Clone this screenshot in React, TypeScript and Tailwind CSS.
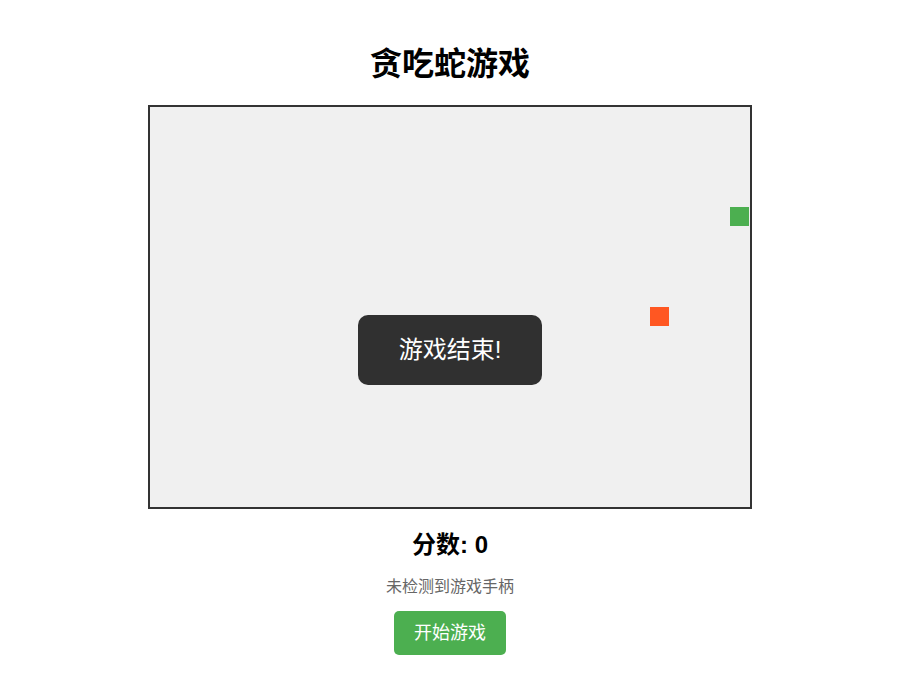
import React from "react";

export default function App() {
  const font = { fontFamily: '"Liberation Sans", "Noto Sans CJK SC", sans-serif' };
  return (
    <div className="w-[900px] h-[700px] bg-white flex flex-col items-center" style={font}>
      <h1 className="mt-[44px] h-[40px] leading-[40px] text-[32px] font-bold text-black mb-[21px]">贪吃蛇游戏</h1>
      <div className="relative w-[604px] h-[404px] border-2 border-[#333333] bg-[#f0f0f0]">
        <div className="absolute left-[580px] top-[100px] w-[19px] h-[19px] bg-[#4caf50]" />
        <div className="absolute left-[500px] top-[200px] w-[19px] h-[19px] bg-[#ff5722]" />
        <div className="absolute left-[208px] top-[208px] w-[184px] h-[70px] rounded-[10px] bg-[#303030] flex items-center justify-center text-white text-[24px]">
          游戏结束!
        </div>
      </div>
      <div className="mt-[20px] h-[32px] leading-[32px] text-[24px] font-bold text-black">分数: 0</div>
      <div className="mt-[16px] h-[20px] leading-[20px] text-[16px] text-[#666666]">未检测到游戏手柄</div>
      <button className="mt-[14px] w-[112px] h-[44px] rounded-[5px] bg-[#4caf50] text-white text-[18px]">开始游戏</button>
    </div>
  );
}
